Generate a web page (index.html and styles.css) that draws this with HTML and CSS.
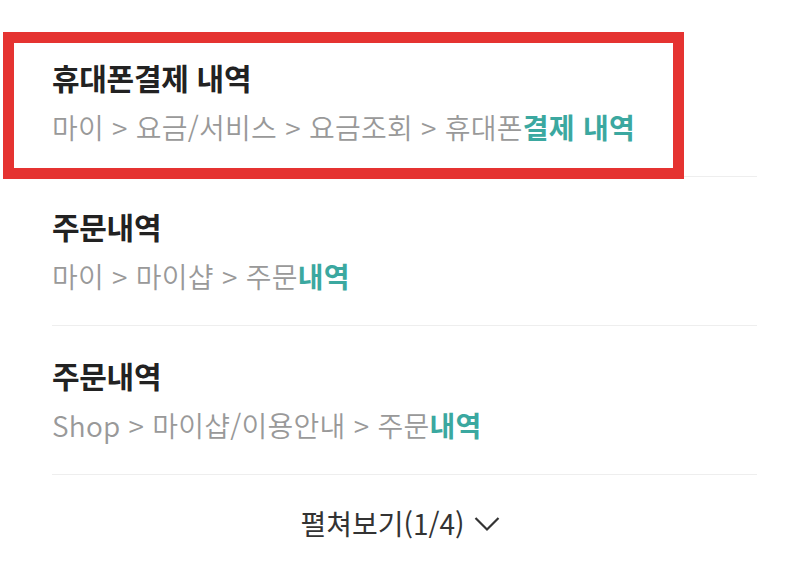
FILE: index.html
```html
<!DOCTYPE html>
<html lang="ko">
<head>
<meta charset="utf-8">
<link rel="stylesheet" href="styles.css">
</head>
<body>
<div class="page">
  <ul class="results">
    <li class="item">
      <div class="title">휴대폰결제 내역</div>
      <div class="path">마이 &gt; 요금/서비스 &gt; 요금조회 &gt; 휴대폰<span class="hl">결제 내역</span></div>
      <div class="highlight-box"></div>
    </li>
    <li class="item">
      <div class="title">주문내역</div>
      <div class="path">마이 &gt; 마이샵 &gt; 주문<span class="hl">내역</span></div>
    </li>
    <li class="item">
      <div class="title">주문내역</div>
      <div class="path">Shop &gt; 마이샵/이용안내 &gt; 주문<span class="hl">내역</span></div>
    </li>
  </ul>
  <div class="more">
    <span class="more-label">펼쳐보기(1/4)</span>
    <svg class="chev" width="26" height="16" viewBox="0 0 26 16"><polyline points="1.5,2 13,13.5 24.5,2" fill="none" stroke="#333" stroke-width="2.2"/></svg>
  </div>
</div>
</body>
</html>
```

FILE: styles.css
```css
html, body {
  margin: 0;
  padding: 0;
  background: #fff;
}
body {
  font-family: "Noto Sans CJK KR", "Noto Sans", sans-serif;
  width: 800px;
  height: 570px;
  overflow: hidden;
}
.page {
  padding-top: 28px;
}
.results {
  list-style: none;
  margin: 0 43px 0 52px;
  padding: 0;
}
.item {
  position: relative;
  height: 148px;
  border-bottom: 1px solid #eeeeee;
}
.title {
  padding-top: 31px;
  font-size: 30px;
  line-height: 36px;
  font-weight: 700;
  color: #222;
  letter-spacing: -0.3px;
}
.path {
  margin-top: 14px;
  font-size: 28px;
  line-height: 36px;
  font-weight: 350;
  color: #999;
  letter-spacing: 0.25px;
  white-space: nowrap;
}
.hl {
  color: #3ba8a0;
  font-weight: 700;
}
.highlight-box {
  position: absolute;
  left: -49px;
  top: 4px;
  width: 681px;
  height: 147px;
  box-sizing: border-box;
  border: 11px solid #e53331;
  pointer-events: none;
}
.more {
  display: flex;
  justify-content: center;
  align-items: center;
  gap: 9px;
  height: 96px;
}
.more-label {
  font-size: 28px;
  line-height: 36px;
  color: #333;
  letter-spacing: 0;
}
.chev {
  display: block;
  margin-top: 2px;
}
```
